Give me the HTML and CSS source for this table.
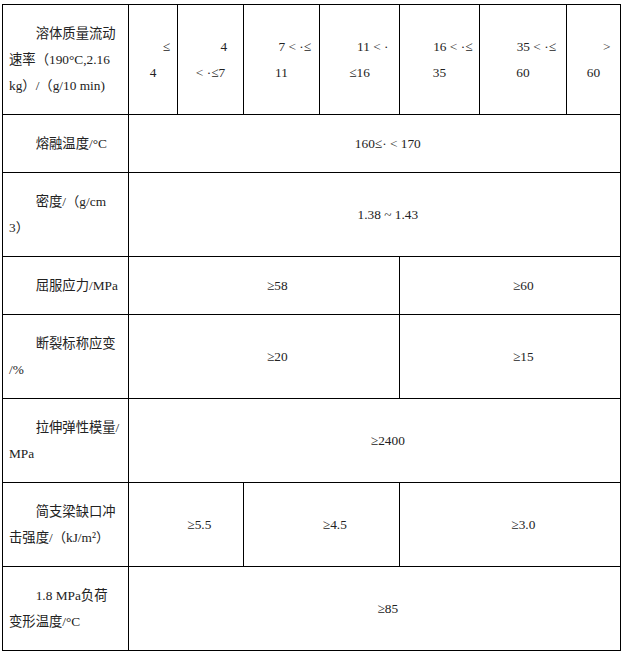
FILE: index.html
```html
<!DOCTYPE html>
<html lang="zh-CN">
<head>
<meta charset="utf-8">
<title>技术指标</title>
<link rel="stylesheet" href="styles.css">
</head>
<body>
<table class="spec">
  <colgroup>
    <col class="c1"><col class="c2"><col class="c3"><col class="c4"><col class="c5"><col class="c6"><col class="c7"><col class="c8">
  </colgroup>
  <tbody>
    <tr>
      <th class="label">溶体质量流动<br>速率（190°C,2.16<br>kg）/（g/10 min)</th>
      <td class="val">≤<br>4</td>
      <td class="val">4<br>&lt; ·≤7</td>
      <td class="val">7 &lt; ·≤<br>11</td>
      <td class="val">11 &lt; ·<br>≤16</td>
      <td class="val">16 &lt; ·≤<br>35</td>
      <td class="val">35 &lt; ·≤<br>60</td>
      <td class="val">&gt;<br>60</td>
    </tr>
    <tr>
      <th class="label">熔融温度/°C</th>
      <td class="val" colspan="7">160≤· &lt; 170</td>
    </tr>
    <tr>
      <th class="label">密度/（g/cm<br>3）</th>
      <td class="val" colspan="7">1.38 ~ 1.43</td>
    </tr>
    <tr>
      <th class="label">屈服应力/MPa</th>
      <td class="val" colspan="4">≥58</td>
      <td class="val" colspan="3">≥60</td>
    </tr>
    <tr>
      <th class="label">断裂标称应变<br>/%</th>
      <td class="val" colspan="4">≥20</td>
      <td class="val" colspan="3">≥15</td>
    </tr>
    <tr>
      <th class="label">拉伸弹性模量/<br>MPa</th>
      <td class="val" colspan="7">≥2400</td>
    </tr>
    <tr>
      <th class="label">简支梁缺口冲<br>击强度/（kJ/m²）</th>
      <td class="val" colspan="2">≥5.5</td>
      <td class="val" colspan="2">≥4.5</td>
      <td class="val" colspan="3">≥3.0</td>
    </tr>
    <tr>
      <th class="label">1.8 MPa负荷<br>变形温度/°C</th>
      <td class="val" colspan="7">≥85</td>
    </tr>
  </tbody>
</table>
</body>
</html>
```

FILE: styles.css
```css
html, body {
  background: #ffffff;
}
body {
  margin: 4px 0 0 2px;
  font-family: "Liberation Serif", "Noto Sans CJK SC", serif;
  font-size: 13.33px;
  color: #222222;
}
.spec {
  border-collapse: collapse;
  table-layout: fixed;
  width: 619px;
}
.c1 { width: 126px; }
.c2 { width: 49px; }
.c3 { width: 66px; }
.c4 { width: 76px; }
.c5 { width: 80px; }
.c6 { width: 80px; }
.c7 { width: 87px; }
.c8 { width: 54px; }
.spec th,
.spec td {
  border: 1px solid #000000;
  padding: 15.5px 6px;
  line-height: 26px;
  text-indent: 2em;
  white-space: nowrap;
  font-weight: normal;
  vertical-align: middle;
}
.spec .label {
  text-align: left;
}
.spec .val {
  text-align: center;
}
```
